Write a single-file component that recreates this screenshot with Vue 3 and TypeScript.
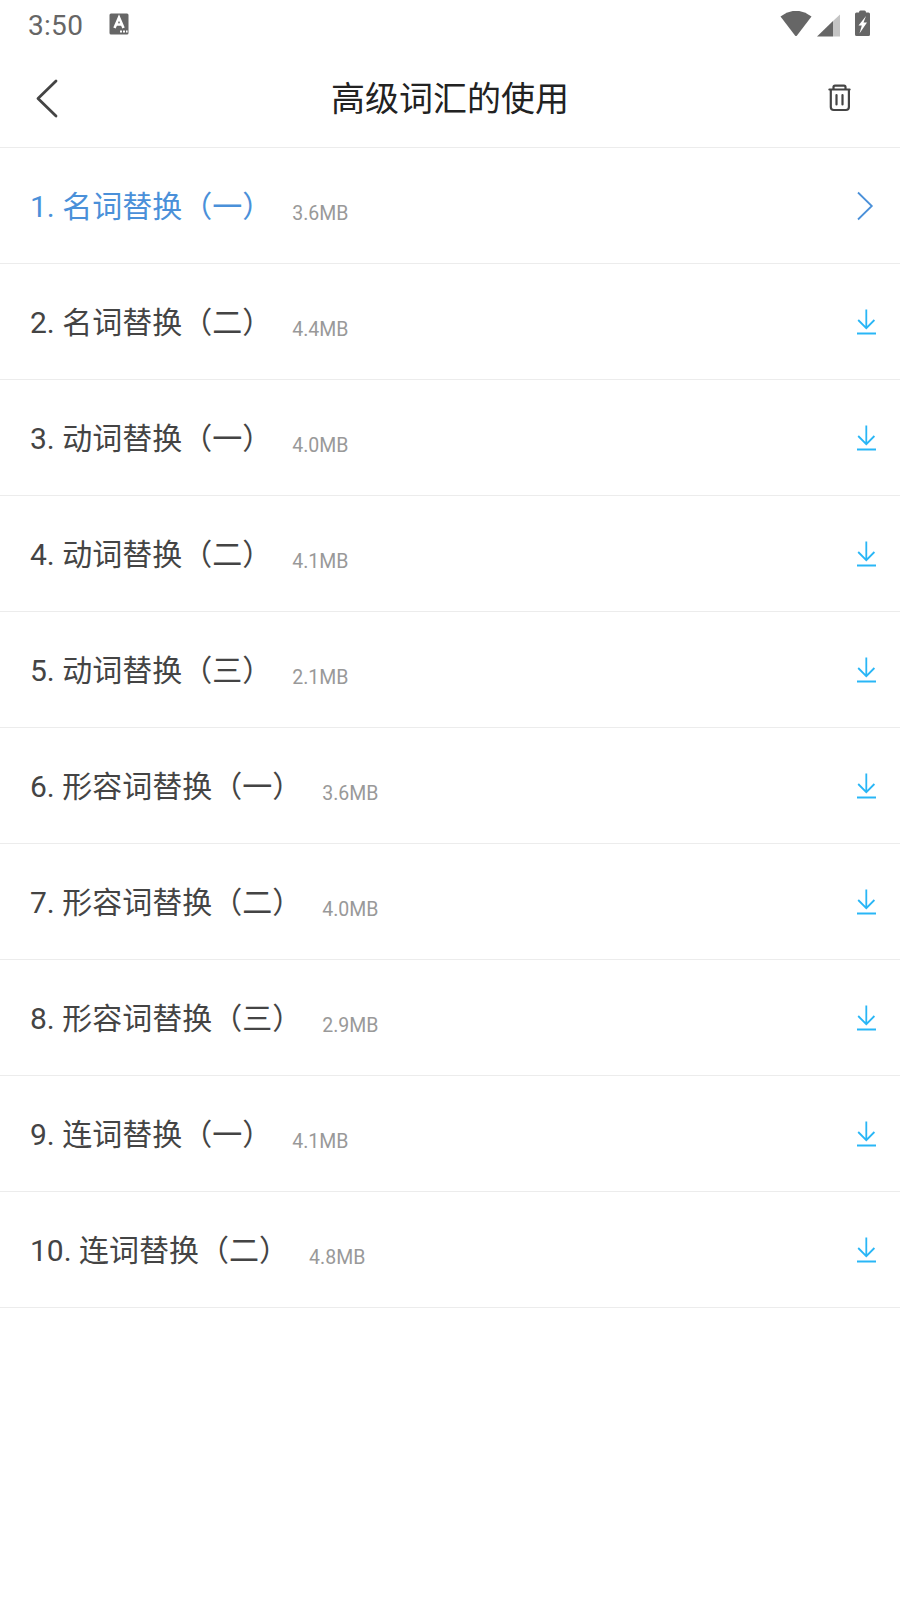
<script setup lang="ts">
interface Lesson { title: string; size: string }
const lessons: Lesson[] = [
  { title: '1. 名词替换（一）', size: '3.6MB' },
  { title: '2. 名词替换（二）', size: '4.4MB' },
  { title: '3. 动词替换（一）', size: '4.0MB' },
  { title: '4. 动词替换（二）', size: '4.1MB' },
  { title: '5. 动词替换（三）', size: '2.1MB' },
  { title: '6. 形容词替换（一）', size: '3.6MB' },
  { title: '7. 形容词替换（二）', size: '4.0MB' },
  { title: '8. 形容词替换（三）', size: '2.9MB' },
  { title: '9. 连词替换（一）', size: '4.1MB' },
  { title: '10. 连词替换（二）', size: '4.8MB' },
]
</script>

<template>
  <div class="page">
    <div class="status">
      <div class="status-left">
        <span class="time">3:50</span>
        <svg class="a-icon" width="20" height="22" viewBox="0 0 20 22">
          <rect x="0.5" y="0.5" width="19" height="21" rx="1.5" fill="#666" />
          <path d="M5.500 15 L10 4.500 L14.500 15 M7.300 11.500 H12.700" stroke="#fff" stroke-width="2.600" fill="none" />
          <rect x="11" y="17.500" width="2" height="2" fill="#fff" />
          <rect x="14" y="17.500" width="2" height="2" fill="#fff" />
          <rect x="17" y="17.500" width="1.600" height="2" fill="#fff" />
        </svg>
      </div>
      <div class="status-right">
        <svg width="32" height="26" viewBox="0 0 32 26">
          <path d="M0.500 5.500 Q16 -6 31.500 5.500 L17 24.500 Q16 25.500 15 24.500 Z" fill="#666" />
        </svg>
        <svg class="signal" width="23" height="23" viewBox="0 0 23 23">
          <path d="M0 22.500 L16 7 V22.500 Z" fill="#666" />
          <path d="M16 7 L23 0.500 V22.500 H16 Z" fill="#c4c4c4" />
        </svg>
        <svg class="battery" width="15" height="26" viewBox="0 0 15 26">
          <path d="M4 2.500 Q4 0.500 5.500 0.500 H9.500 Q11 0.500 11 2.500 H13.500 Q15 2.500 15 4 V24.500 Q15 26 13.500 26 H1.500 Q0 26 0 24.500 V4 Q0 2.500 1.500 2.500 Z" fill="#666" />
          <path d="M11 6 L3.500 15.500 H6.800 L4.500 23.500 L12 12.500 H8.500 Z" fill="#fff" />
        </svg>
      </div>
    </div>

    <header class="nav">
      <svg class="back" width="24" height="40" viewBox="0 0 24 40">
        <path d="M22 2 L4 19.500 L22 37" stroke="#444" stroke-width="2.800" fill="none" stroke-linecap="round" stroke-linejoin="round" />
      </svg>
      <h1 class="title">高级词汇的使用</h1>
      <svg class="trash" width="26" height="30" viewBox="0 0 26 30">
        <path d="M3.400 5.500 H23.600 M7.500 5.500 V3 Q7.500 1.600 9 1.600 H18 Q19.500 1.600 19.500 3 V5.500 M4.800 5.500 V23 Q4.800 26 7.800 26 H19.900 Q22.900 26 22.900 23 V5.500 M10.500 11 V20.500 M16.500 11 V20.500" stroke="#444" stroke-width="2.200" fill="none" stroke-linecap="round" />
      </svg>
    </header>

    <ul class="list">
      <li v-for="(item, i) in lessons" :key="item.title" class="row" :class="{ active: i === 0 }">
        <span class="name">{{ item.title }}</span>
        <span class="size">{{ item.size }}</span>
        <svg v-if="i === 0" class="chev" width="18" height="30" viewBox="0 0 18 30">
          <path d="M1 1.500 L14.800 15 L1 28.500" stroke="#4a90d9" stroke-width="1.800" fill="none" />
        </svg>
        <svg v-else class="dl" width="20" height="26" viewBox="0 0 20 26">
          <path d="M9.300 0.500 V19 M1.200 11 L9.300 19.200 L17.400 11" stroke="#29b6f6" stroke-width="1.800" fill="none" />
          <path d="M0 24.500 H19" stroke="#29b6f6" stroke-width="2" fill="none" />
        </svg>
      </li>
    </ul>
  </div>
</template>

<style>
html, body { margin: 0; background: #fff; }
</style>

<style scoped>
.page {
  width: 900px;
  height: 1600px;
  background: #fff;
  font-family: Roboto, "Noto Sans CJK SC", sans-serif;
  overflow: hidden;
}
.status {
  height: 50px;
  display: flex;
  justify-content: space-between;
  align-items: center;
  padding: 0 30px 0 28px;
}
.status-left { display: flex; align-items: center; gap: 26px; }
.time { font-size: 28px; letter-spacing: 0.3px; color: #666; line-height: 50px; margin-top: 1px; }
.a-icon { margin-bottom: 2px; }
.status-right { display: flex; align-items: flex-start; height: 36px; margin-top: 8px; }
.signal { margin-left: 5px; margin-top: 3px; }
.battery { margin-left: 15px; margin-top: -1px; }
.nav {
  height: 97px;
  display: flex;
  align-items: center;
  justify-content: space-between;
  padding: 0 48px 0 34px;
  border-bottom: 1px solid #ececec;
  position: relative;
}
.title {
  position: absolute;
  left: 0;
  right: 0;
  margin: 0 0 4px;
  text-align: center;
  font-size: 34px;
  font-weight: 400;
  color: #222;
}
.list { list-style: none; margin: 0; padding: 0; }
.row {
  height: 115px;
  border-bottom: 1px solid #ececec;
  display: flex;
  align-items: center;
  padding: 0 23px 0 30px;
}
.name { font-size: 30px; color: #444; margin-bottom: 4px; }
.active .name { color: #4a90d9; }
.size { font-size: 19.500px; color: #999; margin-left: 20px; margin-top: 16px; }
.chev { margin-left: auto; margin-right: 2px; }
.dl { margin-left: auto; }
</style>
